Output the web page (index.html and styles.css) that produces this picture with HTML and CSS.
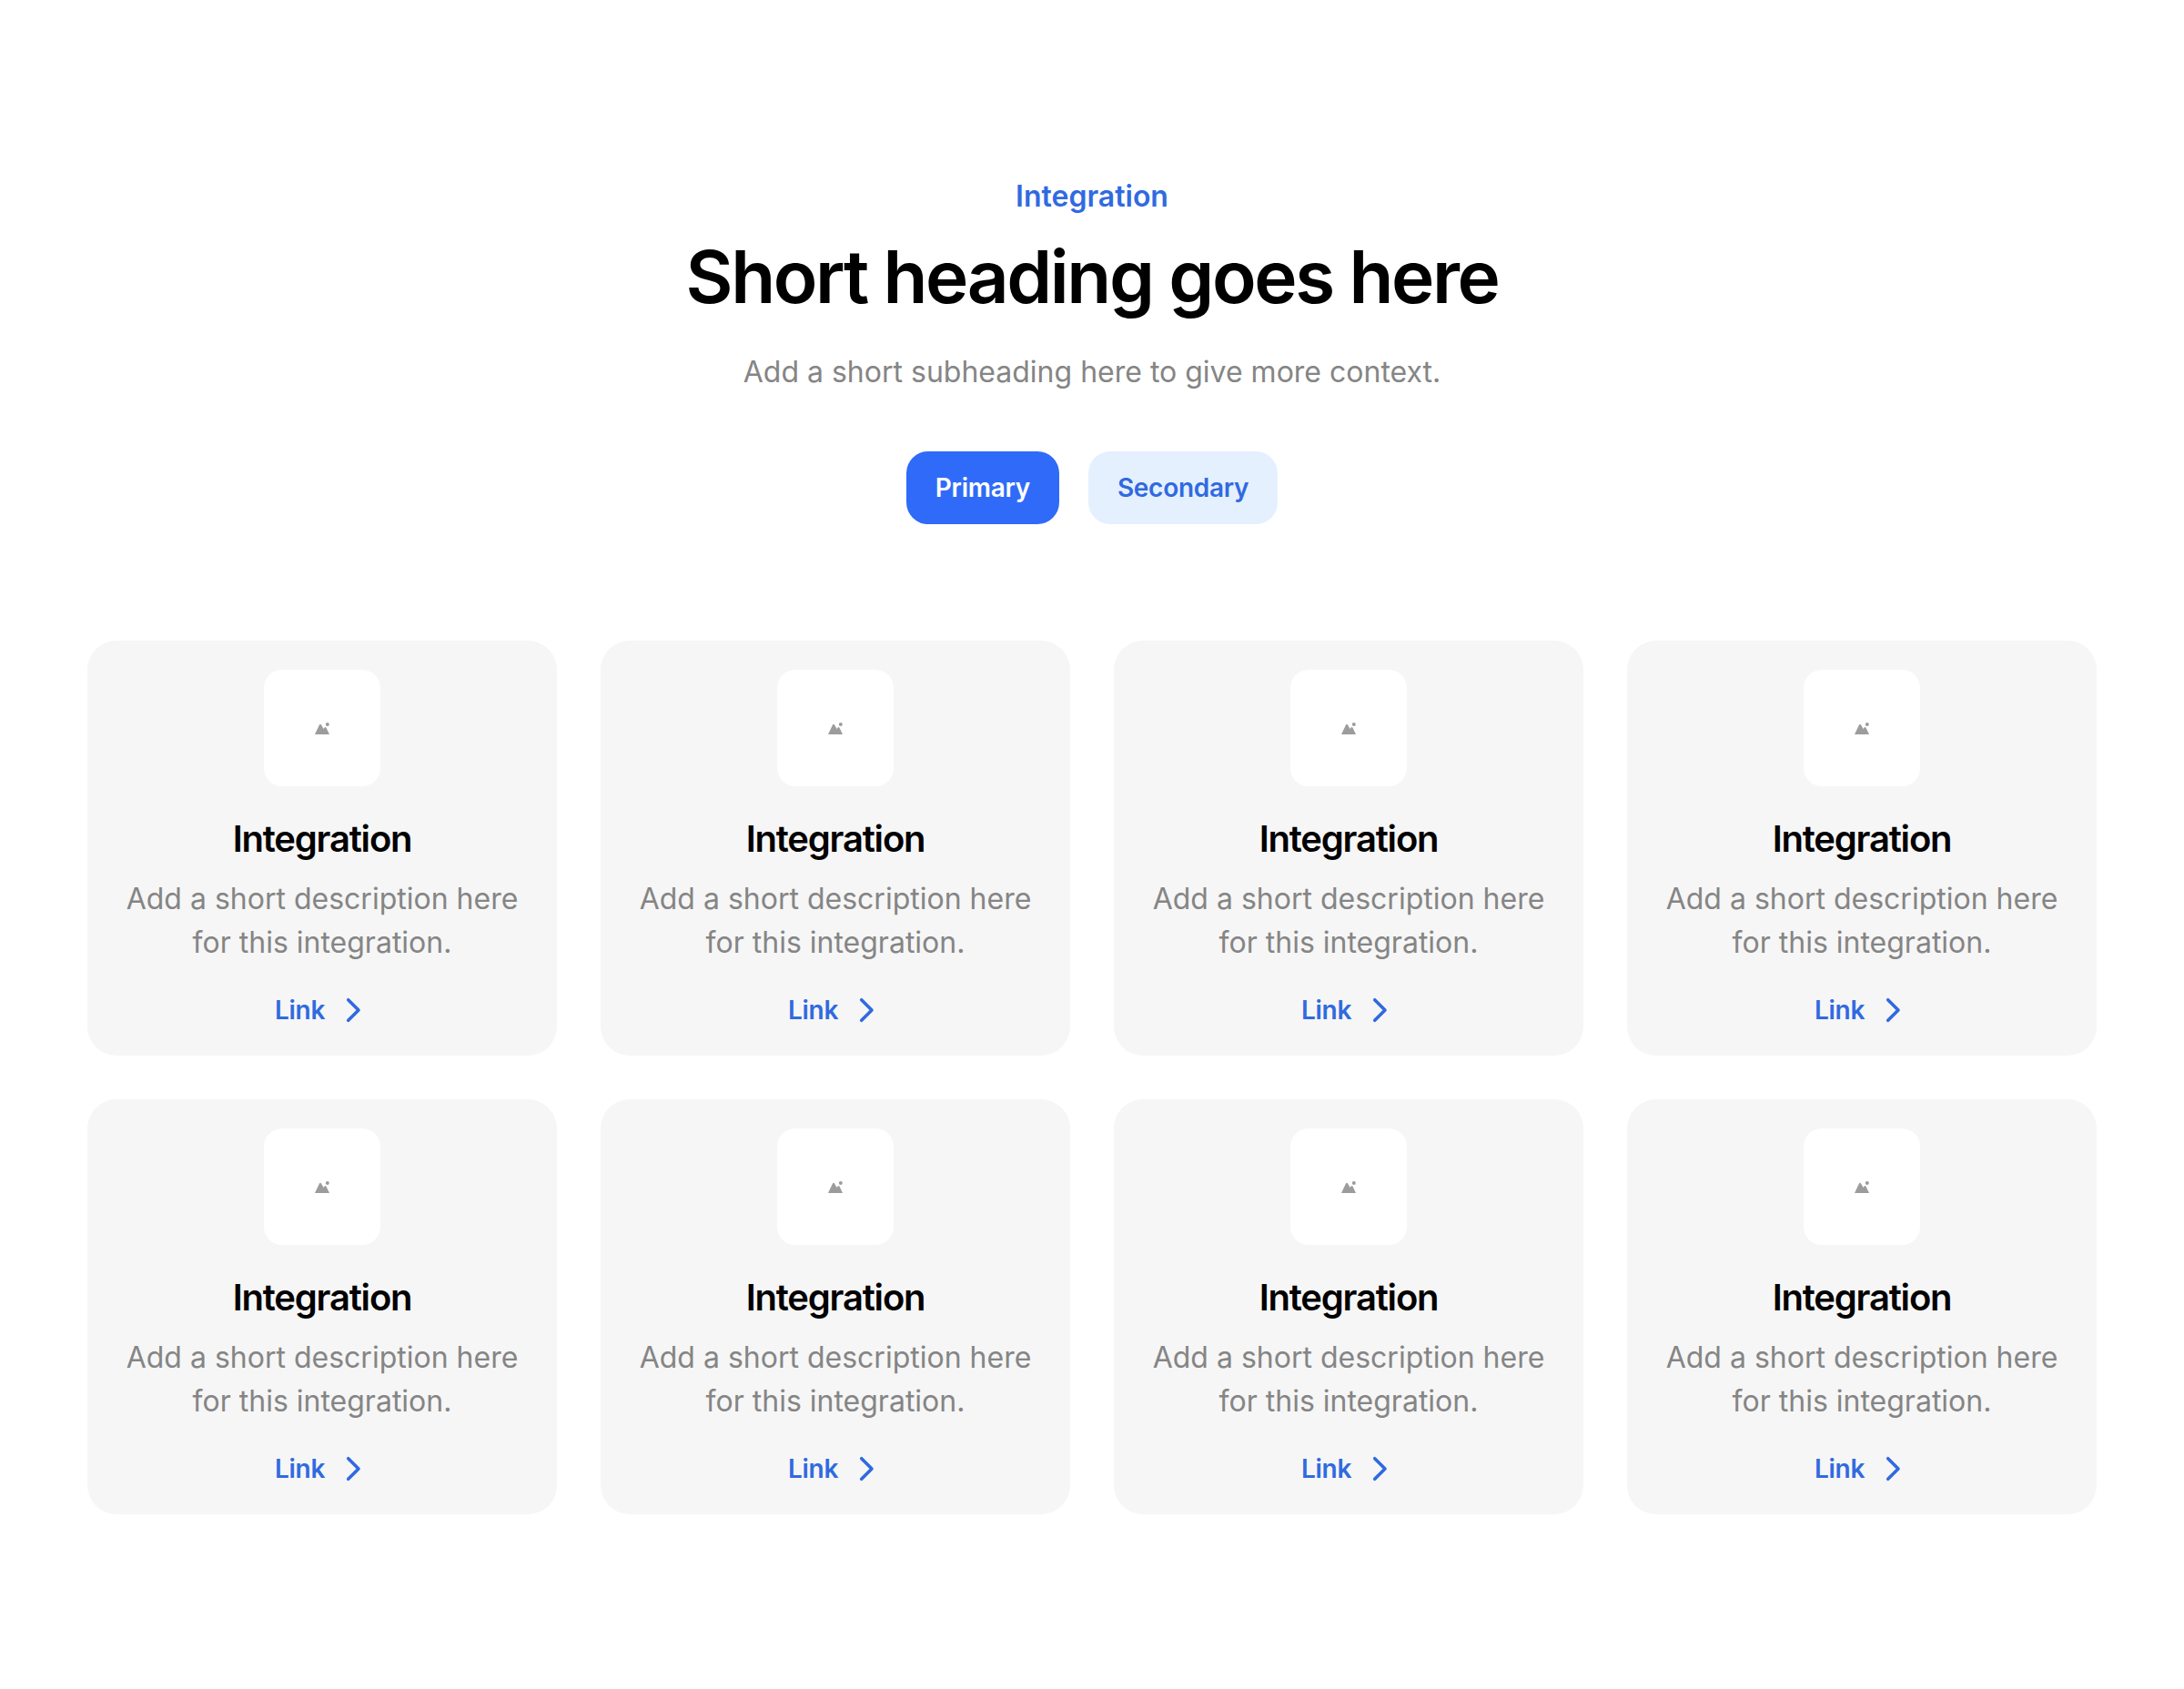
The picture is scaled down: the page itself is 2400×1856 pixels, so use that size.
FILE: index.html
```html
<!DOCTYPE html>
<html lang="en">
<head>
<meta charset="utf-8">
<title>Integrations</title>
<link rel="stylesheet" href="styles.css">
</head>
<body>
<main class="section">
  <header class="hero">
    <p class="eyebrow">Integration</p>
    <h1 class="heading">Short heading goes here</h1>
    <p class="subheading">Add a short subheading here to give more context.</p>
    <div class="actions">
      <a class="btn btn-primary" href="#">Primary</a>
      <a class="btn btn-secondary" href="#">Secondary</a>
    </div>
  </header>
  <div class="grid">
    <article class="card"><div class="logo"><svg class="logo-icon" viewBox="0 0 16 13"><path d="M0 13 L5 2.5 Q6 1 7 2.5 L9.6 7 L10.6 5.6 Q11.5 4.6 12.4 5.6 L16 13 Z"/><circle cx="13.8" cy="2" r="2"/></svg></div><h2 class="card-title">Integration</h2><p class="card-text">Add a short description here for this integration.</p><a class="link" href="#">Link<svg class="chevron" viewBox="0 0 32 32"><path d="M11.7 4.7 L23 16 L11.7 27.3"/></svg></a></article>
    <article class="card"><div class="logo"><svg class="logo-icon" viewBox="0 0 16 13"><path d="M0 13 L5 2.5 Q6 1 7 2.5 L9.6 7 L10.6 5.6 Q11.5 4.6 12.4 5.6 L16 13 Z"/><circle cx="13.8" cy="2" r="2"/></svg></div><h2 class="card-title">Integration</h2><p class="card-text">Add a short description here for this integration.</p><a class="link" href="#">Link<svg class="chevron" viewBox="0 0 32 32"><path d="M11.7 4.7 L23 16 L11.7 27.3"/></svg></a></article>
    <article class="card"><div class="logo"><svg class="logo-icon" viewBox="0 0 16 13"><path d="M0 13 L5 2.5 Q6 1 7 2.5 L9.6 7 L10.6 5.6 Q11.5 4.6 12.4 5.6 L16 13 Z"/><circle cx="13.8" cy="2" r="2"/></svg></div><h2 class="card-title">Integration</h2><p class="card-text">Add a short description here for this integration.</p><a class="link" href="#">Link<svg class="chevron" viewBox="0 0 32 32"><path d="M11.7 4.7 L23 16 L11.7 27.3"/></svg></a></article>
    <article class="card"><div class="logo"><svg class="logo-icon" viewBox="0 0 16 13"><path d="M0 13 L5 2.5 Q6 1 7 2.5 L9.6 7 L10.6 5.6 Q11.5 4.6 12.4 5.6 L16 13 Z"/><circle cx="13.8" cy="2" r="2"/></svg></div><h2 class="card-title">Integration</h2><p class="card-text">Add a short description here for this integration.</p><a class="link" href="#">Link<svg class="chevron" viewBox="0 0 32 32"><path d="M11.7 4.7 L23 16 L11.7 27.3"/></svg></a></article>
    <article class="card"><div class="logo"><svg class="logo-icon" viewBox="0 0 16 13"><path d="M0 13 L5 2.5 Q6 1 7 2.5 L9.6 7 L10.6 5.6 Q11.5 4.6 12.4 5.6 L16 13 Z"/><circle cx="13.8" cy="2" r="2"/></svg></div><h2 class="card-title">Integration</h2><p class="card-text">Add a short description here for this integration.</p><a class="link" href="#">Link<svg class="chevron" viewBox="0 0 32 32"><path d="M11.7 4.7 L23 16 L11.7 27.3"/></svg></a></article>
    <article class="card"><div class="logo"><svg class="logo-icon" viewBox="0 0 16 13"><path d="M0 13 L5 2.5 Q6 1 7 2.5 L9.6 7 L10.6 5.6 Q11.5 4.6 12.4 5.6 L16 13 Z"/><circle cx="13.8" cy="2" r="2"/></svg></div><h2 class="card-title">Integration</h2><p class="card-text">Add a short description here for this integration.</p><a class="link" href="#">Link<svg class="chevron" viewBox="0 0 32 32"><path d="M11.7 4.7 L23 16 L11.7 27.3"/></svg></a></article>
    <article class="card"><div class="logo"><svg class="logo-icon" viewBox="0 0 16 13"><path d="M0 13 L5 2.5 Q6 1 7 2.5 L9.6 7 L10.6 5.6 Q11.5 4.6 12.4 5.6 L16 13 Z"/><circle cx="13.8" cy="2" r="2"/></svg></div><h2 class="card-title">Integration</h2><p class="card-text">Add a short description here for this integration.</p><a class="link" href="#">Link<svg class="chevron" viewBox="0 0 32 32"><path d="M11.7 4.7 L23 16 L11.7 27.3"/></svg></a></article>
    <article class="card"><div class="logo"><svg class="logo-icon" viewBox="0 0 16 13"><path d="M0 13 L5 2.5 Q6 1 7 2.5 L9.6 7 L10.6 5.6 Q11.5 4.6 12.4 5.6 L16 13 Z"/><circle cx="13.8" cy="2" r="2"/></svg></div><h2 class="card-title">Integration</h2><p class="card-text">Add a short description here for this integration.</p><a class="link" href="#">Link<svg class="chevron" viewBox="0 0 32 32"><path d="M11.7 4.7 L23 16 L11.7 27.3"/></svg></a></article>
  </div>
</main>
</body>
</html>
```
FILE: styles.css
```css
* { box-sizing: border-box; }
html, body { margin: 0; background: #fff; }
body { font-family: Inter, "Liberation Sans", sans-serif; color: #000; }
a { text-decoration: none; }
.section { padding: 192px 96px; }
.hero { display: flex; flex-direction: column; align-items: center; text-align: center; }
.eyebrow { margin: 0; font-size: 32px; line-height: 48px; font-weight: 600; color: #306ae0; }
.heading { margin: 16px 0 0; font-size: 80px; line-height: 96px; font-weight: 600; letter-spacing: -2.4px; }
.subheading { margin: 32px 0 0; font-size: 32px; line-height: 50px; color: #858585; }
.actions { display: flex; gap: 32px; margin-top: 62px; }
.btn { display: flex; align-items: center; height: 80px; padding: 0 32px; border-radius: 24px; font-size: 28px; font-weight: 600; letter-spacing: -0.28px; }
.btn-primary { background: #2f6bf8; color: #fff; }
.btn-secondary { background: #e5f0ff; color: #306ae0; }
.grid { display: grid; grid-template-columns: repeat(4, 516px); gap: 48px; margin-top: 128px; }
.card { display: flex; flex-direction: column; align-items: center; padding: 32px 32px 30px; border-radius: 32px; background: #f6f6f6; text-align: center; }
.logo { display: flex; align-items: center; justify-content: center; width: 128px; height: 128px; border-radius: 20px; background: #fff; }
.logo-icon { width: 16px; height: 13px; fill: #9c9c9c; }
.card-title { margin: 32px 0 0; font-size: 40px; line-height: 52px; font-weight: 600; letter-spacing: -1.2px; }
.card-text { margin: 16px 0 0; font-size: 32px; line-height: 48px; color: #858585; }
.link { display: flex; align-items: center; gap: 14px; margin-top: 30px; margin-right: 3px; font-size: 28px; line-height: 40px; font-weight: 600; letter-spacing: -0.28px; color: #306ae0; }
.chevron { width: 32px; height: 32px; fill: none; stroke: #306ae0; stroke-width: 3.6; stroke-linecap: round; stroke-linejoin: round; }
```
